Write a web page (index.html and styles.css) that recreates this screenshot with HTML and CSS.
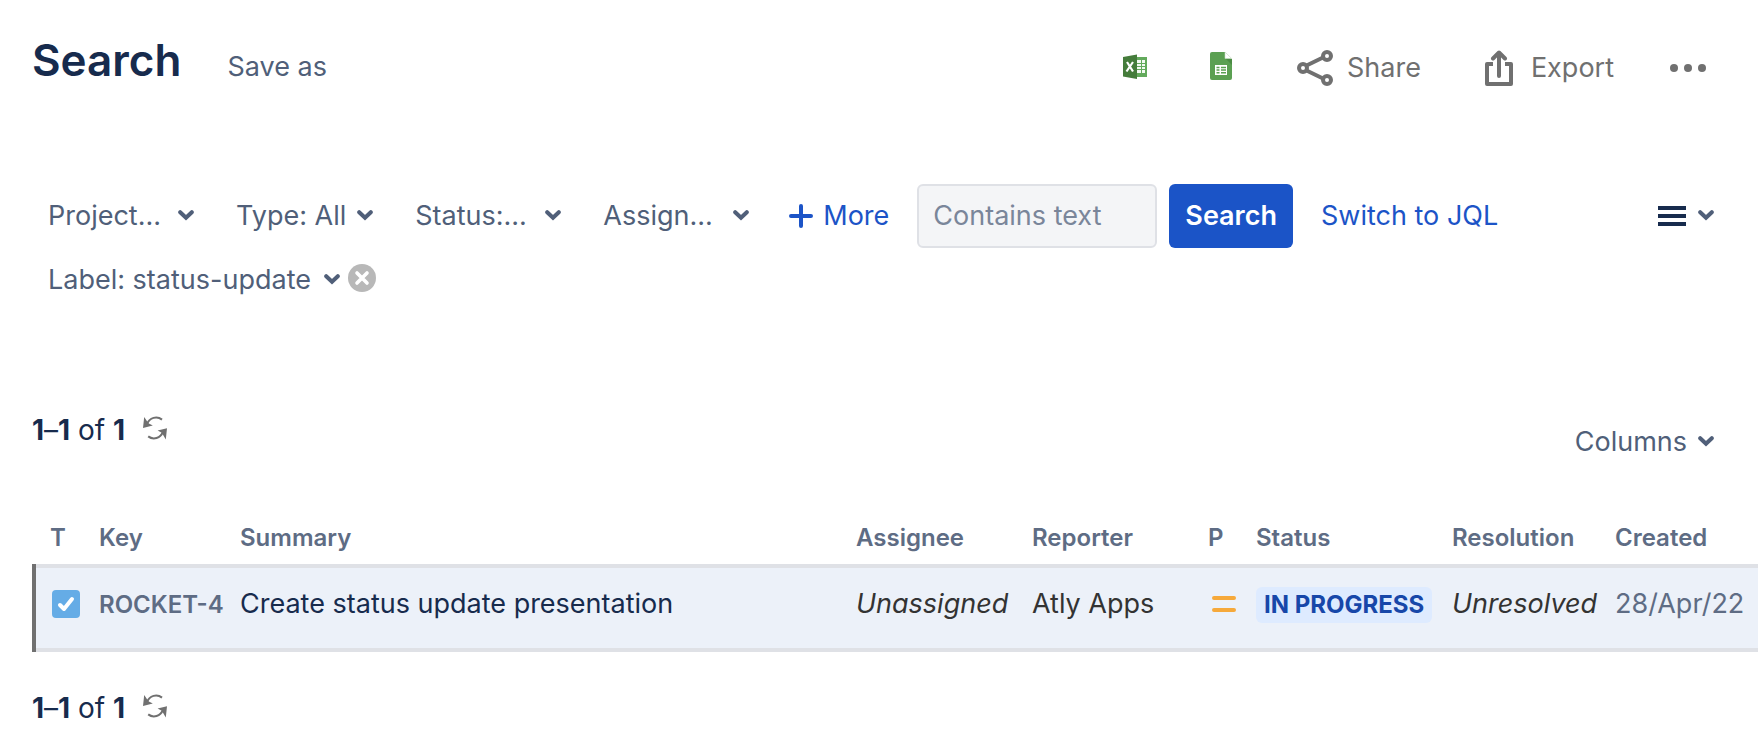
FILE: index.html
```html
<!DOCTYPE html>
<html lang="en">
<head>
<meta charset="utf-8">
<title>Search</title>
<link rel="stylesheet" href="styles.css">
</head>
<body>
<svg class="defs" aria-hidden="true">
  <symbol id="chevron" viewBox="0 0 16 12"><path d="M2.200 2.200 L8 7.800 L13.800 2.200" fill="none" stroke="currentColor" stroke-width="4" stroke-linecap="round" stroke-linejoin="miter"/></symbol>
  <symbol id="refresh" viewBox="0 0 24 24"><path d="M19 3.600 A9.400 9.400 0 0 0 4.200 7.800 M5.200 20.400 A9.400 9.400 0 0 0 19.800 16.200" fill="none" stroke="currentColor" stroke-width="2"/><path d="M1.200 1 L0 12 L9.800 9.400 L5.400 7.200 Z M22.800 23.600 L24 12.200 L14.600 14.600 L18.800 16.800 Z" fill="currentColor"/></symbol>
</svg>
<header class="page-header">
  <div class="title-group">
    <h1 class="title">Search</h1>
    <button class="plain save" type="button">Save as</button>
  </div>
  <div class="actions">
    <button class="plain app excel" type="button" aria-label="Open in Excel">
      <svg width="24" height="25" viewBox="0 0 24 25"><path d="M13 3h11v20H13z" fill="#63aa5c"/><path d="M14 6h4v3h-4zM19 6h3v3h-3zM14 10h4v2h-4zM19 10h3v2h-3zM14 13h4v2h-4zM19 13h3v2h-3zM14 16h4v3h-4zM19 16h3v3h-3z" fill="#f3f9f2"/><path d="M0 3 L14 0.500V25L0 22.500z" fill="#457c3b"/><path d="M4 8l6 9.500M10 8l-6.500 9.500" stroke="#fff" stroke-width="2.200" fill="none"/></svg>
    </button>
    <button class="plain app sheets" type="button" aria-label="Open in Sheets">
      <svg width="22" height="28" viewBox="0 0 22 28"><path d="M2 0h13l7 7v19a2 2 0 0 1-2 2H2a2 2 0 0 1-2-2V2a2 2 0 0 1 2-2z" fill="#5ba052"/><path d="M15 0h7v7z" fill="#fff"/><path d="M15 0l6.700 6.500H15z" fill="#fff" stroke="#c9dcc6" stroke-width=".6"/><path d="M16 7h6v6z" fill="#4b8b43"/><path d="M5 13h12v10H5z" fill="#fff"/><path d="M6.500 15.500h3M11 15.500h5M6.500 18h3M11 18h5M6.500 20.700h3M11 20.700h5" stroke="#5ba052" stroke-width="1.400"/></svg>
    </button>
    <button class="plain share" type="button">
      <svg width="36" height="36" viewBox="0 0 36 36" fill="none" stroke="currentColor" stroke-width="4"><path d="M8.500 16L26 7.500M8.500 20L26 28.500"/><circle cx="6" cy="18" r="4"/><circle cx="30" cy="6" r="4"/><circle cx="30" cy="30" r="4"/></svg>
      Share
    </button>
    <button class="plain export" type="button">
      <svg width="28" height="36" viewBox="0 0 28 36" fill="none" stroke="currentColor" stroke-width="4" stroke-linejoin="round"><path d="M8 14H2V34H26V14H20"/><path d="M14 26V3M8 8.500L14 2.500L20 8.500" stroke-linecap="round"/></svg>
      Export
    </button>
    <button class="plain" type="button" aria-label="More actions">
      <svg width="36" height="8" viewBox="0 0 36 8" fill="currentColor"><circle cx="4" cy="4" r="4"/><circle cx="18" cy="4" r="4"/><circle cx="32" cy="4" r="4"/></svg>
    </button>
  </div>
</header>
<main>
  <form class="filters">
    <div class="filter-row">
      <button class="plain filter cut" type="button">Project... <svg class="chevron"><use href="#chevron"/></svg></button>
      <button class="plain filter" type="button">Type: All <svg class="chevron"><use href="#chevron"/></svg></button>
      <button class="plain filter cut" type="button">Status:... <svg class="chevron"><use href="#chevron"/></svg></button>
      <button class="plain filter cut" type="button">Assign... <svg class="chevron"><use href="#chevron"/></svg></button>
      <button class="plain more" type="button"><svg width="24" height="24" viewBox="0 0 24 24" fill="none" stroke="currentColor" stroke-width="4" stroke-linecap="round"><path d="M12 2V22M2 12H22"/></svg>More</button>
      <input class="text-box" type="text" placeholder="Contains text" aria-label="Contains text">
      <button class="search" type="submit">Search</button>
      <a class="switch" href="#jql">Switch to JQL</a>
      <button class="plain view" type="button" aria-label="Change view"><svg class="bars" width="28" height="20" viewBox="0 0 28 20"><path d="M0 0h28v4H0zM0 8h28v4H0zM0 16h28v4H0z" fill="#172b4d"/></svg><svg class="chevron"><use href="#chevron"/></svg></button>
    </div>
    <div class="filter-row">
      <button class="plain filter label-filter" type="button">Label: status-update <svg class="chevron"><use href="#chevron"/></svg></button>
      <button class="plain clear" type="button" aria-label="Remove label filter"><svg width="28" height="28" viewBox="0 0 28 28"><circle cx="14" cy="14" r="14" fill="#b8b8b8"/><path d="M9 9l10 10M19 9L9 19" stroke="#fff" stroke-width="3.600" stroke-linecap="round"/></svg></button>
    </div>
  </form>
  <div class="results-bar">
    <div class="count"><span><b>1</b>–<b>1</b> of <b>1</b></span><button class="plain refresh" type="button" aria-label="Refresh"><svg width="24" height="24"><use href="#refresh"/></svg></button></div>
    <button class="plain columns" type="button">Columns <svg class="chevron"><use href="#chevron"/></svg></button>
  </div>
  <table class="issues">
    <colgroup><col class="c-type"><col class="c-key"><col><col class="c-person"><col class="c-person"><col class="c-priority"><col class="c-status"><col class="c-resolution"><col class="c-created"></colgroup>
    <thead>
      <tr><th>T</th><th>Key</th><th>Summary</th><th>Assignee</th><th>Reporter</th><th>P</th><th>Status</th><th>Resolution</th><th>Created</th></tr>
    </thead>
    <tbody>
      <tr>
        <td><svg class="icon" width="28" height="28" viewBox="0 0 28 28" role="img" aria-label="Task"><rect width="28" height="28" rx="4" fill="#65ace6"/><path d="M8 15l4 4L20 9" fill="none" stroke="#fff" stroke-width="4" stroke-linecap="round" stroke-linejoin="round"/></svg></td>
        <td><a class="key" href="#ROCKET-4">ROCKET-4</a></td>
        <td><a class="summary" href="#ROCKET-4">Create status update presentation</a></td>
        <td><em>Unassigned</em></td>
        <td>Atly Apps</td>
        <td class="priority"><svg class="icon" width="24" height="28" viewBox="0 0 24 28" fill="none" stroke="#f6a93b" stroke-width="4" stroke-linecap="round" role="img" aria-label="Medium"><path d="M2 8H22M2 20H22"/></svg></td>
        <td><span class="badge">IN PROGRESS</span></td>
        <td><em>Unresolved</em></td>
        <td class="date">28/Apr/22</td>
      </tr>
    </tbody>
  </table>
  <div class="count bottom"><span><b>1</b>–<b>1</b> of <b>1</b></span><button class="plain refresh" type="button" aria-label="Refresh"><svg width="24" height="24"><use href="#refresh"/></svg></button></div>
</main>
</body>
</html>
```

FILE: styles.css
```css
* { box-sizing: border-box; }
body {
  margin: 0;
  background: #fff;
  color: #172b4d;
  font: 400 27px/40px Inter, "Liberation Sans", sans-serif;
  overflow-x: hidden;
}
svg { display: block; flex: none; }
.defs { position: absolute; width: 0; height: 0; }
.plain {
  display: flex;
  align-items: center;
  padding: 0;
  border: 0;
  background: none;
  color: #505f79;
  font: inherit;
  white-space: nowrap;
  cursor: pointer;
}
.chevron { width: 16px; height: 12px; }

.page-header {
  display: flex;
  justify-content: space-between;
  align-items: flex-start;
  padding: 35px 52px 0 32px;
}
.title-group { display: flex; align-items: baseline; gap: 46px; }
.title { margin: 0; font-size: 44px; line-height: 50px; font-weight: 600; }
.actions { display: flex; align-items: center; padding-top: 13px; }
.actions .plain { height: 40px; color: #707070; }
.actions .app { padding-bottom: 4px; }
.excel { margin-right: 63px; }
.sheets { margin-right: 65px; }
.actions .share { gap: 14px; margin-right: 64px; }
.actions .export { gap: 18px; margin-right: 56px; }

.filters { padding: 96px 44px 0 32px; }
.filter-row { display: flex; align-items: center; height: 64px; }
.filter {
  justify-content: space-between;
  gap: 11px;
  margin-right: 10px;
  padding: 0 16px;
}
.cut { width: 178px; }
.more { gap: 10px; margin: 0 28px 0 14px; color: #1c54c7; }
.text-box {
  width: 240px;
  height: 64px;
  padding: 0 14px 2px;
  border: 2px solid #dfe1e6;
  border-radius: 6px;
  background: #f4f5f7;
  color: #172b4d;
  font: inherit;
}
.text-box::placeholder { color: #7a869a; opacity: 1; }
.search {
  height: 64px;
  margin-left: 12px;
  padding: 0 16px;
  border: 0;
  border-radius: 6px;
  background: #1b54c7;
  color: #fff;
  font: inherit;
  font-weight: 600;
}
.switch { margin-left: 28px; color: #1c54c7; text-decoration: none; white-space: nowrap; }
.view { gap: 12px; margin-left: auto; }
.label-filter { gap: 13px; margin-right: 8px; padding-right: 0; }
.clear { padding-bottom: 4px; }

.results-bar {
  display: flex;
  justify-content: space-between;
  align-items: flex-start;
  padding: 98px 44px 0 32px;
}
.count { display: flex; align-items: center; gap: 18px; font-size: 28px; }
.count b { font-weight: 700; }
.refresh { padding-bottom: 4px; color: #707070; }
.columns { gap: 11px; margin-top: 12px; }

.issues {
  width: calc(100% - 36px);
  margin: 44px 0 0 36px;
  border-collapse: separate;
  border-spacing: 0;
  table-layout: fixed;
}
.c-type { width: 55px; }
.c-key { width: 141px; }
.c-person { width: 176px; }
.c-priority { width: 48px; }
.c-status { width: 196px; }
.c-resolution { width: 163px; }
.c-created { width: 151px; }
.issues th, .issues td { padding: 0 0 0 8px; text-align: left; white-space: nowrap; vertical-align: top; }
.issues th { height: 58px; padding-top: 12px; color: #5e6c84; font-size: 24px; line-height: 40px; font-weight: 600; }
.issues th:first-child { padding-left: 14px; }
.issues td {
  height: 88px;
  padding-top: 16px;
  border-top: 4px solid #dfe1e6;
  border-bottom: 4px solid #dfe1e6;
  background: #ecf1f9;
  color: #333;
}
.issues td:first-child { padding-left: 16px; box-shadow: -4px 0 #707070; }
.issues .icon { margin-top: 6px; }
.issues .priority { padding-left: 12px; }
.issues a { text-decoration: none; }
.key { color: #5e6c84; font-size: 24px; font-weight: 600; }
.summary { color: #172b4d; }
.badge {
  display: inline-block;
  padding: 0 8px;
  border-radius: 6px;
  background: #deebff;
  color: #1747a9;
  font-size: 24px;
  line-height: 36px;
  font-weight: 700;
}
.issues .date { color: #5e6c84; }
.bottom { padding: 36px 32px 20px; }
```
